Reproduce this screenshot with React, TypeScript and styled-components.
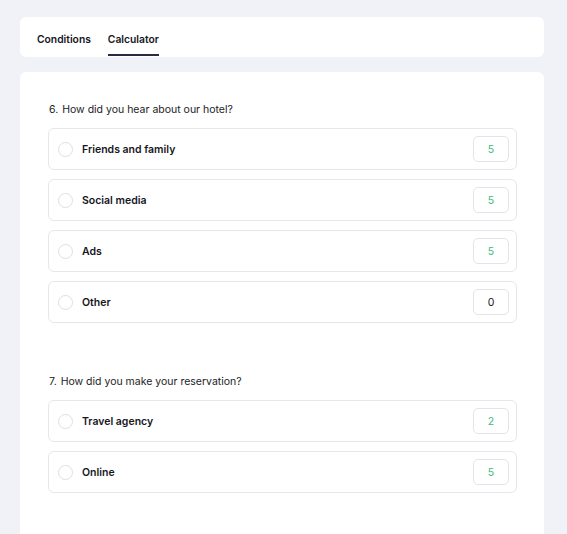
import styled, { createGlobalStyle } from "styled-components";

const GlobalStyle = createGlobalStyle`
  html, body {
    margin: 0;
    padding: 0;
    background: #f1f2f7;
    font-family: Inter, "Noto Sans", sans-serif;
    color: #16161d;
  }
`;

const Page = styled.div`
  padding: 17px 23px 0 20px;
  display: flex;
  flex-direction: column;
  gap: 15px;
  height: 534px;
  box-sizing: border-box;
  overflow: hidden;
`;

const TabBar = styled.div`
  background: #fff;
  border-radius: 6px;
  height: 40px;
  display: flex;
  align-items: stretch;
  gap: 17px;
  padding: 0 17px;
`;

const Tab = styled.div<{ $active?: boolean }>`
  font-size: 10.3px;
  font-weight: 600;
  display: flex;
  align-items: center;
  padding-top: 7px;
  box-sizing: border-box;
  border-bottom: 2px solid ${(p) => (p.$active ? "#2b2a45" : "transparent")};
  margin-bottom: 1px;
  color: #16161d;
`;

const Card = styled.div`
  background: #fff;
  border-radius: 6px 6px 0 0;
  flex: 1;
  padding: 30px 27px 0 28px;
  display: flex;
  flex-direction: column;
`;

const Question = styled.section`
  display: flex;
  flex-direction: column;
  gap: 9px;
  & + & {
    margin-top: 51px;
  }
`;

const Title = styled.div`
  font-size: 10.5px;
  line-height: 16px;
  padding-left: 1px;
  margin-bottom: 1px;
  color: #1c1c24;
  display: flex;
  gap: 4px;
`;

const Option = styled.label`
  height: 42px;
  box-sizing: border-box;
  border: 1px solid #e6e7ec;
  border-radius: 6px;
  display: flex;
  align-items: center;
  padding: 0 7px 0 9px;
`;

const Radio = styled.span`
  width: 15px;
  height: 15px;
  box-sizing: border-box;
  border-radius: 50%;
  border: 1px solid #dedfe4;
  margin-right: 9px;
`;

const Label = styled.span`
  font-size: 10.5px;
  font-weight: 600;
  flex: 1;
`;

const Score = styled.span<{ $zero?: boolean }>`
  width: 36px;
  height: 26px;
  box-sizing: border-box;
  border: 1px solid #e3e4e9;
  border-radius: 5px;
  display: flex;
  align-items: center;
  justify-content: center;
  font-size: 10.5px;
  color: ${(p) => (p.$zero ? "#16161d" : "#3dba7d")};
`;

const questions = [
  {
    num: "6.",
    title: "How did you hear about our hotel?",
    options: [
      ["Friends and family", 5],
      ["Social media", 5],
      ["Ads", 5],
      ["Other", 0],
    ],
  },
  {
    num: "7.",
    title: "How did you make your reservation?",
    options: [
      ["Travel agency", 2],
      ["Online", 5],
    ],
  },
] as const;

export default function App() {
  return (
    <>
      <GlobalStyle />
      <Page>
        <TabBar>
          <Tab>Conditions</Tab>
          <Tab $active>Calculator</Tab>
        </TabBar>
        <Card>
          {questions.map((q) => (
            <Question key={q.title}>
              <Title>
                <span>{q.num}</span>
                <span>{q.title}</span>
              </Title>
              {q.options.map(([label, score]) => (
                <Option key={label}>
                  <Radio />
                  <Label>{label}</Label>
                  <Score $zero={score === 0}>{score}</Score>
                </Option>
              ))}
            </Question>
          ))}
        </Card>
      </Page>
    </>
  );
}
